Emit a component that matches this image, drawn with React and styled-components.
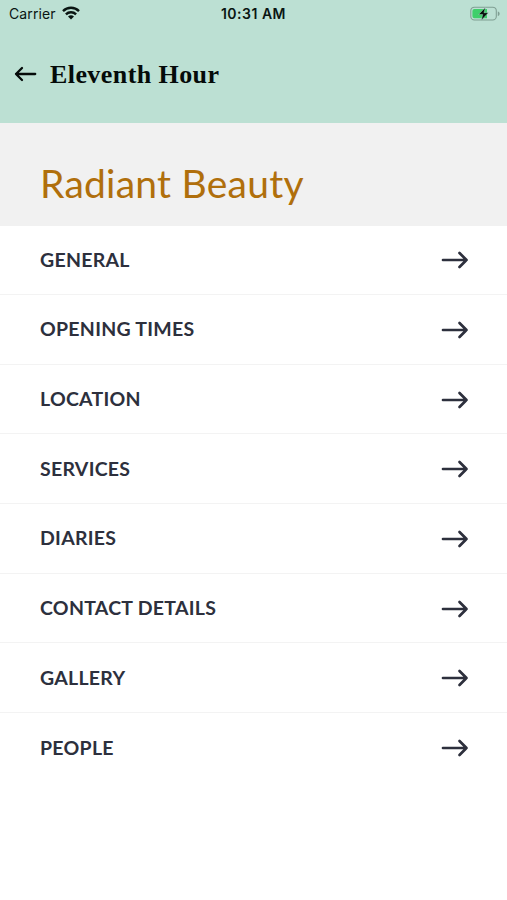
import React from "react";
import styled, { createGlobalStyle } from "styled-components";

const sections = [
  "General",
  "Opening Times",
  "Location",
  "Services",
  "Diaries",
  "Contact Details",
  "Gallery",
  "People",
];

const App = () => {
  return (
    <>
      <GlobalStyle />
      <Screen>
        <StatusBar>
          <Carrier>
            Carrier
            <WifiIcon />
          </Carrier>
          <Clock>10:31 AM</Clock>
          <BatteryBox>
            <BatteryIcon />
          </BatteryBox>
        </StatusBar>
        <Header>
          <BackButton aria-label="Back">
            <svg width="23" height="16" viewBox="0 0 23 16">
              <path d="M21.2 8H2M8 2L2 8l6 6" />
            </svg>
          </BackButton>
          <HeaderTitle>Eleventh Hour</HeaderTitle>
        </Header>
        <Banner>
          <BusinessName>Radiant Beauty</BusinessName>
        </Banner>
        <Menu>
          {sections.map((name) => (
            <MenuRow key={name}>
              <MenuLabel>{name}</MenuLabel>
              <svg width="28" height="18" viewBox="0 0 28 18">
                <path d="M2 9h23.5M18.5 2l7 7-7 7" />
              </svg>
            </MenuRow>
          ))}
        </Menu>
      </Screen>
    </>
  );
};

const WifiIcon = () => (
  <svg width="18" height="14" viewBox="0 0 18 14">
    <g fill="none" stroke="#0a1512" strokeWidth="2.4">
      <path d="M1 5.1a11.4 11.4 0 0 1 16 0" />
      <path d="M3.9 8.3a7.3 7.3 0 0 1 10.2 0" />
    </g>
    <path d="M9 13.6l-3-3a4.3 4.3 0 0 1 6 0z" fill="#0a1512" />
  </svg>
);

const BatteryIcon = () => (
  <svg width="31" height="16" viewBox="0 0 31 16">
    <rect
      x="0.8"
      y="1.2"
      width="25.5"
      height="12.8"
      rx="3.6"
      fill="none"
      stroke="#7f9e92"
      strokeWidth="1.1"
    />
    <path d="M27.8 5.4v4.6c1.1-.3 1.8-1.2 1.8-2.3s-.7-2-1.8-2.3z" fill="#7f9e92" />
    <path d="M4.4 3H17v9.2H4.4a2 2 0 0 1-2-2V5a2 2 0 0 1 2-2z" fill="#3fcf6b" />
    <path
      d="M15.4 1.4L8.6 8.5h4.1l-1.3 5.7 7-7.5h-4.4z"
      fill="#07110d"
      stroke="#bce0d3"
      strokeWidth="0.4"
    />
  </svg>
);

const GlobalStyle = createGlobalStyle`
  * {
    box-sizing: border-box;
  }

  body {
    margin: 0;
    background-color: #fff;
  }
`;

const Screen = styled.div`
  display: flex;
  flex-direction: column;
  width: 100%;
  height: 900px;
  overflow: hidden;
  background-color: #fff;
`;

const StatusBar = styled.div`
  display: grid;
  grid-template-columns: 1fr auto 1fr;
  align-items: center;
  height: 27px;
  padding: 0 6px 0 9px;
  background-color: #bce0d3;
  color: #0a1512;
  font-family: Inter, sans-serif;
  font-size: 14px;
`;

const Carrier = styled.div`
  display: flex;
  align-items: center;
  gap: 6px;
  letter-spacing: 0.1px;

  svg {
    margin-top: -2px;
  }
`;

const Clock = styled.div`
  margin-right: 3px;
  font-weight: 600;
  letter-spacing: 0.5px;
`;

const BatteryBox = styled.div`
  display: flex;
  justify-content: flex-end;
`;

const Header = styled.header`
  display: flex;
  align-items: center;
  height: 96px;
  padding: 0 14px;
  background-color: #bce0d3;
`;

const BackButton = styled.button`
  display: flex;
  margin-top: -2px;
  padding: 0;
  border: none;
  background: none;
  cursor: pointer;

  path {
    fill: none;
    stroke: #050b09;
    stroke-width: 2.3;
    stroke-linecap: round;
    stroke-linejoin: round;
  }
`;

const HeaderTitle = styled.h1`
  margin: 0 0 0 13px;
  font-family: "Liberation Serif", serif;
  font-weight: 700;
  font-size: 26px;
  letter-spacing: 0.42px;
  color: #050b09;
`;

const Banner = styled.div`
  height: 102.5px;
  padding: 36px 40px 0;
  background-color: #f1f1f1;
`;

const BusinessName = styled.h2`
  margin: 0;
  font-family: Lato, sans-serif;
  font-weight: 400;
  font-size: 39px;
  line-height: 48px;
  letter-spacing: 0.25px;
  color: #b06f0c;
`;

const Menu = styled.ul`
  margin: 0;
  padding: 0;
  list-style: none;
`;

const MenuRow = styled.li`
  display: flex;
  align-items: center;
  justify-content: space-between;
  height: 69.65px;
  padding: 0 38px 0 40px;
  border-bottom: 1px solid #f3f3f3;
  cursor: pointer;

  &:last-child {
    border-bottom: none;
  }

  svg {
    margin-top: 1px;
  }

  path {
    fill: none;
    stroke: #2d303d;
    stroke-width: 2.7;
    stroke-linecap: round;
    stroke-linejoin: round;
  }
`;

const MenuLabel = styled.span`
  font-family: Lato, sans-serif;
  font-weight: 700;
  font-size: 19.5px;
  line-height: 24px;
  letter-spacing: 0.27px;
  color: #2d303d;
  text-transform: uppercase;
`;

export default App;
